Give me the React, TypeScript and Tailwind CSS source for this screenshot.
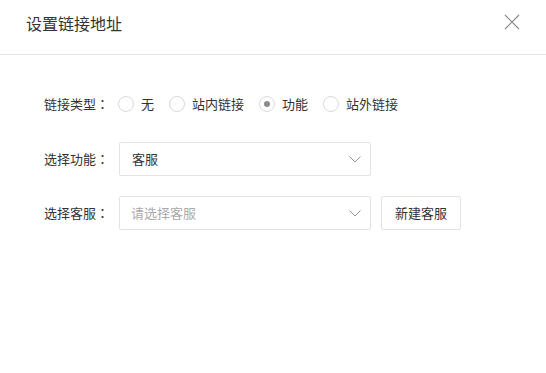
import { useState } from 'react'

const linkTypes = ['无', '站内链接', '功能', '站外链接']

const Chevron = () => (
    <svg width="12" height="7" viewBox="0 0 12 7" className="text-[#999]">
        <path d="M0.5 0.5 L6 6 L11.5 0.5" fill="none" stroke="currentColor" strokeWidth="1" />
    </svg>
)

const Radio = ({ label, checked, onClick }: { label: string, checked: boolean, onClick: () => void }) => (
    <label className="flex items-center mr-[15px] cursor-pointer" onClick={onClick}>
        <span className="w-4 h-4 rounded-full border border-[#d9d9d9] flex items-center justify-center bg-white">
            {checked && <span className="w-[6px] h-[6px] rounded-full bg-[#8c8c8c]" />}
        </span>
        <span className="ml-[7px]">{label}</span>
    </label>
)

// colon centred in its cell, like the original
const Label = ({ text, className }: { text: string, className: string }) => (
    <span className={className}>
        {text}
        <span className="font-['Noto_Sans_CJK_TC',sans-serif]">：</span>
    </span>
)

export default function App() {
    const [tipo, setTipo] = useState('功能')

    return (
        <div className="w-[546px] h-[373px] bg-white text-[#333] text-[13px] font-['Noto_Sans_CJK_SC','Noto_Sans',sans-serif]">
            <div className="h-[55px] border-b border-[#e8e8e8] flex items-center justify-between pl-[26px] pr-[26px]">
                <span className="text-[16px] text-[#333] -mt-[9px]">设置链接地址</span>
                <svg width="16" height="16" viewBox="0 0 16 16" className="text-[#888] -mt-[10px]">
                    <path d="M1 1 L15 15 M15 1 L1 15" stroke="currentColor" strokeWidth="1.1" />
                </svg>
            </div>

            <div className="pl-[44px] pt-[33px]">
                <div className="flex items-center h-8">
                    <Label text="链接类型" className="w-[74px]" />
                    {linkTypes.map((t) => (
                        <Radio key={t} label={t} checked={tipo === t} onClick={() => setTipo(t)} />
                    ))}
                </div>

                <div className="flex items-center h-[34px] mt-[22px]">
                    <Label text="选择功能" className="w-[75px]" />
                    <div className="w-[252px] h-[34px] border border-[#e3e3e3] rounded-[2px] flex items-center justify-between pl-3 pr-[9px]">
                        <span className="text-[#333]">客服</span>
                        <Chevron />
                    </div>
                </div>

                <div className="flex items-center h-[34px] mt-5">
                    <Label text="选择客服" className="w-[75px]" />
                    <div className="w-[252px] h-[34px] border border-[#e3e3e3] rounded-[2px] flex items-center justify-between pl-[11px] pr-[9px]">
                        <span className="text-[#aaa]">请选择客服</span>
                        <Chevron />
                    </div>
                    <button className="ml-[10px] w-[80px] h-[34px] border border-[#e3e3e3] rounded-[2px] bg-white text-[#333]">
                        新建客服
                    </button>
                </div>
            </div>
        </div>
    )
}
